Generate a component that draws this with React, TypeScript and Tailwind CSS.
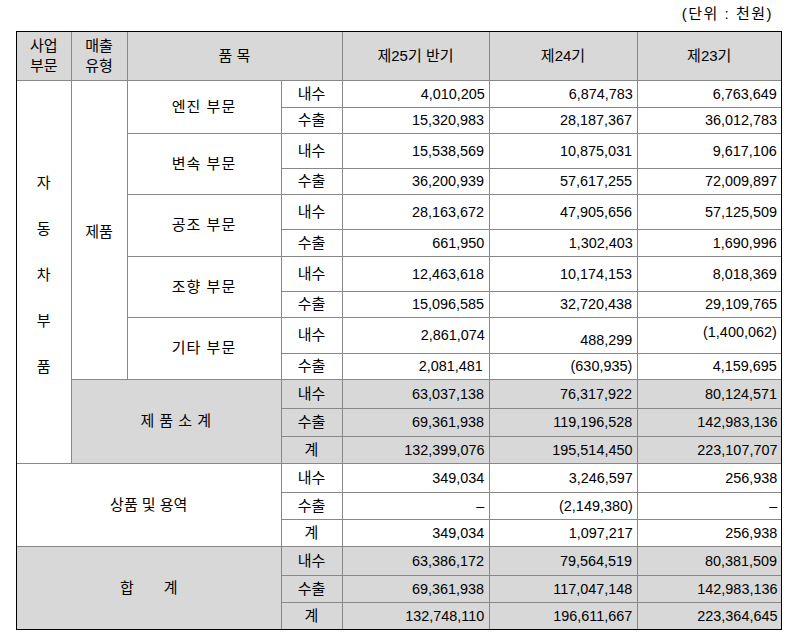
import type { ReactNode } from "react";

type Row = {
    h: string;
    lead?: ReactNode;
    label: string;
    vals: [string, string, string];
    gray?: boolean;
    valCls?: [string, string, string];
};

const cell = "border border-[#888] font-normal";

const rows: Row[] = [
    { h: "h-[27px]", label: "내수", vals: ["4,010,205", "6,874,783", "6,763,649"] },
    { h: "h-[26px]", label: "수출", vals: ["15,320,983", "28,187,367", "36,012,783"] },
    { h: "h-[35px]", label: "내수", vals: ["15,538,569", "10,875,031", "9,617,106"] },
    { h: "h-[26px]", label: "수출", vals: ["36,200,939", "57,617,255", "72,009,897"] },
    { h: "h-[35px]", label: "내수", vals: ["28,163,672", "47,905,656", "57,125,509"] },
    { h: "h-[27px]", label: "수출", vals: ["661,950", "1,302,403", "1,690,996"] },
    { h: "h-[35px]", label: "내수", vals: ["12,463,618", "10,174,153", "8,018,369"] },
    { h: "h-[26px]", label: "수출", vals: ["15,096,585", "32,720,438", "29,109,765"] },
    {
        h: "h-[36px]",
        label: "내수",
        vals: ["2,861,074", "488,299", "(1,400,062)"],
        valCls: ["", "pt-[9px]", "pb-[6px]"],
    },
    {
        h: "h-[26px]",
        label: "수출",
        vals: ["2,081,481", "(630,935)", "4,159,695"],
        valCls: ["pr-[6px]", "", ""],
    },
    { h: "h-[29px]", label: "내수", vals: ["63,037,138", "76,317,922", "80,124,571"], gray: true },
    { h: "h-[28px]", label: "수출", vals: ["69,361,938", "119,196,528", "142,983,136"], gray: true },
    { h: "h-[27px]", label: "계", vals: ["132,399,076", "195,514,450", "223,107,707"], gray: true },
    { h: "h-[29px]", label: "내수", vals: ["349,034", "3,246,597", "256,938"] },
    { h: "h-[27px]", label: "수출", vals: ["–", "(2,149,380)", "–"] },
    { h: "h-[27px]", label: "계", vals: ["349,034", "1,097,217", "256,938"] },
    { h: "h-[29px]", label: "내수", vals: ["63,386,172", "79,564,519", "80,381,509"], gray: true },
    { h: "h-[27px]", label: "수출", vals: ["69,361,938", "117,047,148", "142,983,136"], gray: true },
    { h: "h-[27px]", label: "계", vals: ["132,748,110", "196,611,667", "223,364,645"], gray: true },
];

const segment = (name: string) => (
    <td rowSpan={2} className={`${cell} text-center tracking-[1px]`}>
        {name}
    </td>
);

rows[0].lead = (
    <>
        <td rowSpan={13} className={`${cell} pt-[6px]`}>
            <div className="flex flex-col items-center gap-[26px] leading-[20px]">
                {["자", "동", "차", "부", "품"].map((c) => (
                    <span key={c}>{c}</span>
                ))}
            </div>
        </td>
        <td rowSpan={10} className={`${cell} pt-[4px] text-center`}>
            제품
        </td>
        {segment("엔진 부문")}
    </>
);
rows[2].lead = segment("변속 부문");
rows[4].lead = segment("공조 부문");
rows[6].lead = segment("조향 부문");
rows[8].lead = segment("기타 부문");
rows[10].lead = (
    <td colSpan={2} rowSpan={3} className={`${cell} bg-[#d8d8d8] text-center tracking-[0.5px]`}>
        제 품 소 계
    </td>
);
rows[13].lead = (
    <td colSpan={3} rowSpan={3} className={`${cell} text-center`}>
        상품 및 용역
    </td>
);
rows[16].lead = (
    <td colSpan={3} rowSpan={3} className={`${cell} bg-[#d8d8d8] text-center`}>
        합<span className="inline-block w-[30px]" />계
    </td>
);

export default function App() {
    return (
        <div className="min-h-[637px] w-[798px] bg-white pl-[16px] font-['Liberation_Sans','Noto_Sans_CJK_KR',sans-serif] text-[15px] text-black">
            <div className="flex h-[31px] items-center justify-end pr-[25px] pb-[2px] tracking-[1.5px]">
                (단위 : 천원)
            </div>

            <div className="w-[766px] border border-black">
                <table className="w-[764px] table-fixed border-collapse border-hidden leading-[20px]">
                    <colgroup>
                        <col className="w-[54px]" />
                        <col className="w-[56px]" />
                        <col className="w-[154px]" />
                        <col className="w-[61px]" />
                        <col className="w-[147px]" />
                        <col className="w-[148px]" />
                        <col className="w-[144px]" />
                    </colgroup>
                    <thead>
                        <tr className="h-[48px] bg-[#d8d8d8]">
                            <th className={cell}>
                                사업
                                <br />
                                부문
                            </th>
                            <th className={cell}>
                                매출
                                <br />
                                유형
                            </th>
                            <th colSpan={2} className={cell}>
                                품 목
                            </th>
                            <th className={cell}>제25기 반기</th>
                            <th className={cell}>제24기</th>
                            <th className={cell}>제23기</th>
                        </tr>
                    </thead>
                    <tbody>
                        {rows.map((r, i) => (
                            <tr key={i} className={r.h}>
                                {r.lead}
                                <td className={`${cell} text-center ${r.gray ? "bg-[#d8d8d8]" : ""}`}>{r.label}</td>
                                {r.vals.map((v, j) => (
                                    <td
                                        key={j}
                                        className={`${cell} pr-[4px] text-right ${r.gray ? "bg-[#d8d8d8]" : ""} ${r.valCls ? r.valCls[j] : ""}`}
                                    >
                                        <span className="inline-block origin-right scale-x-[0.96]">{v}</span>
                                    </td>
                                ))}
                            </tr>
                        ))}
                    </tbody>
                </table>
            </div>
        </div>
    );
}
